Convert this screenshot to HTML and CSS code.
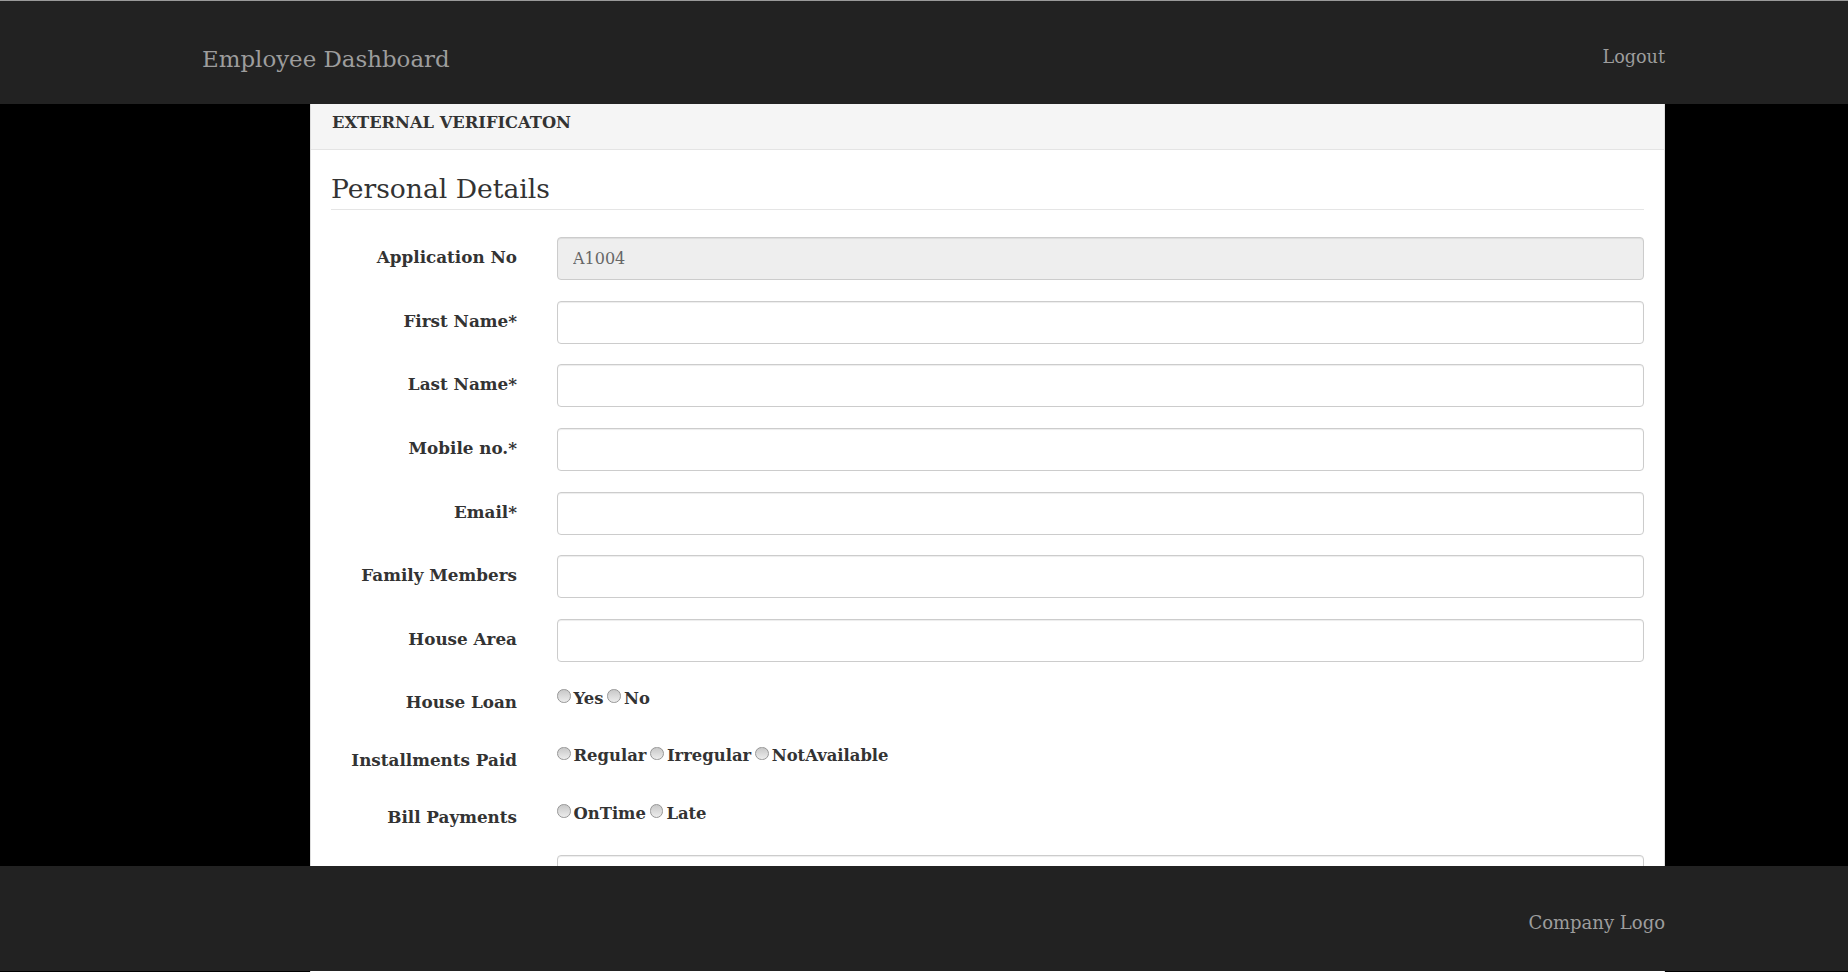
FILE: index.html
```html
<!DOCTYPE html>
<html lang="en">
<head>
<meta charset="utf-8">
<title>Employee Dashboard</title>
<link rel="stylesheet" href="styles.css">
</head>
<body>
<header class="navbar">
  <a class="brand" href="#">Employee Dashboard</a>
  <a class="nav-link" href="#">Logout</a>
</header>
<main class="page">
  <section class="panel">
    <div class="panel-heading">EXTERNAL VERIFICATON</div>
    <div class="panel-body">
      <h3 class="section-title">Personal Details</h3>
      <form class="form">
        <div class="row text-row">
          <label class="control-label">Application No</label>
          <input class="form-control" type="text" value="A1004" disabled>
        </div>
        <div class="row text-row">
          <label class="control-label">First Name*</label>
          <input class="form-control" type="text">
        </div>
        <div class="row text-row">
          <label class="control-label">Last Name*</label>
          <input class="form-control" type="text">
        </div>
        <div class="row text-row">
          <label class="control-label">Mobile no.*</label>
          <input class="form-control" type="text">
        </div>
        <div class="row text-row">
          <label class="control-label">Email*</label>
          <input class="form-control" type="text">
        </div>
        <div class="row text-row">
          <label class="control-label">Family Members</label>
          <input class="form-control" type="text">
        </div>
        <div class="row text-row">
          <label class="control-label">House Area</label>
          <input class="form-control" type="text">
        </div>
        <div class="row radio-row">
          <label class="control-label">House Loan</label>
          <div class="radio-group">
            <label class="radio"><input type="radio" name="loan">Yes</label>
            <label class="radio"><input type="radio" name="loan">No</label>
          </div>
        </div>
        <div class="row radio-row">
          <label class="control-label">Installments Paid</label>
          <div class="radio-group">
            <label class="radio"><input type="radio" name="inst">Regular</label>
            <label class="radio"><input type="radio" name="inst">Irregular</label>
            <label class="radio"><input type="radio" name="inst">NotAvailable</label>
          </div>
        </div>
        <div class="row radio-row">
          <label class="control-label">Bill Payments</label>
          <div class="radio-group">
            <label class="radio"><input type="radio" name="bill">OnTime</label>
            <label class="radio"><input type="radio" name="bill">Late</label>
          </div>
        </div>
        <div class="row text-row">
          <label class="control-label">Remarks</label>
          <input class="form-control" type="text">
        </div>
        <div class="row text-row">
          <label class="control-label">Address</label>
          <input class="form-control" type="text">
        </div>
      </form>
    </div>
  </section>
</main>
<footer class="footer">
  <span class="footer-text">Company Logo</span>
</footer>
</body>
</html>
```
FILE: styles.css
```css
* { box-sizing: border-box; }

html, body {
  margin: 0;
  padding: 0;
  background: #000;
  font-family: "DejaVu Serif", "Liberation Serif", serif;
  color: #333;
}

a { text-decoration: none; }

.navbar {
  height: 104px;
  background: #222;
  border-top: 1px solid #9a9a9a;
  display: flex;
  justify-content: space-between;
  align-items: flex-start;
  padding: 0 183px 0 202px;
}

.brand {
  color: #9d9d9d;
  font-size: 22.9px;
  line-height: 30px;
  margin-top: 42.5px;
}

.nav-link {
  color: #9d9d9d;
  font-size: 17.6px;
  line-height: 24px;
  margin-top: 43.5px;
}

.page {
  padding: 0 183px 0 310px;
}

.panel {
  background: #fff;
  border: 1px solid #ddd;
  border-top: 0;
}

.panel-heading {
  height: 46px;
  background: #f5f5f5;
  border-bottom: 1px solid #e4e4e4;
  padding: 9px 20px 0 21px;
  font-weight: bold;
  font-size: 16.3px;
  line-height: 20px;
  color: #333;
}

.panel-body {
  padding: 22px 20px 40px 20px;
}

.section-title {
  margin: 0 0 27px 0;
  padding: 0 0 3px 0;
  font-weight: normal;
  font-size: 26.6px;
  line-height: 34px;
  color: #333;
  border-bottom: 1px solid #e5e5e5;
}

.form {
  display: flex;
  flex-direction: column;
  gap: 20.64px;
}

.row {
  display: grid;
  grid-template-columns: 186px 1fr;
  column-gap: 40px;
}

.text-row { height: 43px; }
.radio-row { height: 36.9px; }

.control-label {
  text-align: right;
  font-weight: bold;
  font-size: 16.8px;
  line-height: 20px;
  padding-top: 10px;
  color: #333;
}

.form-control {
  height: 43px;
  width: 100%;
  border: 1px solid #ccc;
  border-radius: 4px;
  box-shadow: inset 0 1px 1px rgba(0,0,0,0.075);
  background: #fff;
  padding: 0 15px;
  font-family: inherit;
  font-size: 16px;
  color: #555;
}

.form-control:disabled {
  background: #eee;
  color: #666;
}

.radio-group {
  display: flex;
  align-items: flex-start;
  padding-top: 6.5px;
  gap: 4px;
}

.radio {
  display: flex;
  align-items: flex-start;
  font-weight: bold;
  font-size: 16.4px;
  line-height: 20px;
  color: #333;
}

.radio input {
  appearance: none;
  -webkit-appearance: none;
  width: 13.5px;
  height: 13.5px;
  margin: 0.5px 3px 0 0;
  border-radius: 50%;
  border: 1px solid #969696;
  background: linear-gradient(to bottom, #c8c8c8, #ececec);
}

.footer {
  position: fixed;
  left: 0;
  right: 0;
  bottom: 1px;
  height: 105px;
  background: #222;
  display: flex;
  justify-content: flex-end;
  align-items: flex-start;
  padding: 0 183px 0 202px;
}

.footer-text {
  color: #9d9d9d;
  font-size: 18px;
  line-height: 24px;
  margin-top: 45px;
}
```
